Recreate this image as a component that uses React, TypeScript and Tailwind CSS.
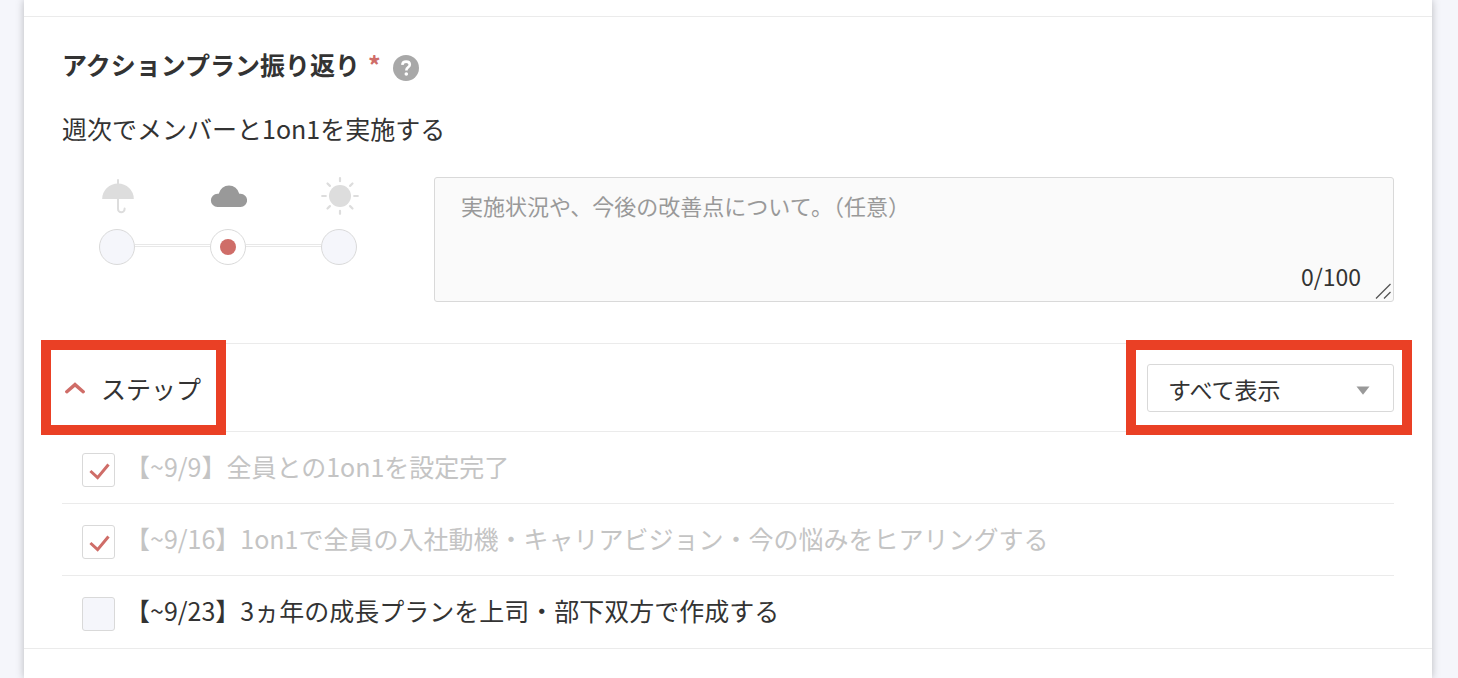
import { useState } from 'react'

const steps = [
  { id: 'step-1', label: '【~9/9】全員との1on1を設定完了', done: true },
  { id: 'step-2', label: '【~9/16】1on1で全員の入社動機・キャリアビジョン・今の悩みをヒアリングする', done: true },
  { id: 'step-3', label: '【~9/23】3ヵ年の成長プランを上司・部下双方で作成する', done: false },
]

const weathers = [
  { value: 'rain', label: '雨', Icon: UmbrellaIcon },
  { value: 'cloud', label: '曇り', Icon: CloudIcon },
  { value: 'sun', label: '晴れ', Icon: SunIcon },
]

function UmbrellaIcon() {
  return (
    <svg viewBox="0 0 38 38" className="h-[38px] w-[38px] shrink-0" aria-hidden="true">
      <path d="M4.200 22a15.800 15.400 0 0 1 31.600 0z" fill="currentColor" />
      <path d="M20 3v5M20 21v11a3.300 3.300 0 0 0 6.600 0v-.600" fill="none" stroke="currentColor" strokeWidth="2" strokeLinecap="round" />
    </svg>
  )
}

function CloudIcon() {
  return (
    <svg viewBox="0 0 38 38" className="h-[38px] w-[38px] shrink-0" aria-hidden="true">
      <path d="M8.500 30a6.500 6.500 0 0 1 0-13.200h1.200a10.600 11 0 0 1 20.600 0h1.200a6.600 6.600 0 0 1 0 13.200z" fill="currentColor" />
    </svg>
  )
}

function SunIcon() {
  return (
    <svg viewBox="0 0 38 38" className="h-[38px] w-[38px] shrink-0 overflow-visible" aria-hidden="true">
      <circle cx="20" cy="19" r="11" fill="currentColor" />
      <path
        d="M20 1.200v3M20 33.800v3M2.200 19h3.600M34.200 19h3.600M7.500 6.500l2.400 2.400M30.100 29.100l2.400 2.400M7.500 31.500l2.400-2.400M30.100 8.900l2.400-2.400"
        stroke="currentColor"
        strokeWidth="2.2"
        strokeLinecap="round"
      />
    </svg>
  )
}

export default function App() {
  const [weather, setWeather] = useState('cloud')
  const [comment, setComment] = useState('')
  const [open, setOpen] = useState(true)
  const [filter, setFilter] = useState('all')
  const [done, setDone] = useState(steps.filter(s => s.done).map(s => s.id))

  const toggle = (id: string) =>
    setDone(done.includes(id) ? done.filter(d => d !== id) : [...done, id])

  const visible = steps.filter(s => filter === 'all' || !done.includes(s.id))

  return (
    <div className="min-h-screen bg-[#f5f6fb] pl-6 pr-[26px] font-['Noto_Sans_CJK_JP',sans-serif] text-[#333]">
      <main className="min-h-screen bg-white pt-4 shadow-[0_0_8px_rgba(0,0,0,0.25)]">
        <section className="border-y border-[#ebebeb] px-[38px] pt-[29px]">

          {/* Title */}
          <div className="flex items-center">
            <h2 className="text-[25px] font-bold leading-9">
              アクションプラン振り返り
            </h2>
            <span className="ml-2 text-[25px] font-bold leading-9 text-[#cf6d68]">*</span>
            <button type="button" aria-label="ヘルプ" className="ml-3 pt-2">
              <svg viewBox="0 0 26 26" className="block h-[26px] w-[26px]" aria-hidden="true">
                <circle cx="13" cy="13" r="13" fill="#a8a8a8" />
                <path d="M9.300 9.900c.2-2.200 1.700-3.300 3.800-3.300 2.200 0 3.700 1.200 3.700 3.100 0 2.500-3.400 2.700-3.400 5.300v.400" fill="none" stroke="#fff" strokeWidth="2.600" />
                <circle cx="13.300" cy="19" r="1.800" fill="#fff" />
              </svg>
            </button>
          </div>

          <p className="mt-7 text-[25px] leading-9">週次でメンバーと1on1を実施する</p>

          {/* Weather and comment */}
          <div className="mt-[31px] flex items-start">
            <div role="radiogroup" aria-label="実施状況" className="ml-[37px] flex items-end">
              {weathers.map(({ value, label, Icon }, i) => (
                <div key={value} className="flex items-end">
                  {i > 0 && <div className="mb-[18px] h-[3px] w-[75px] border-y border-[#e8e8e8]" />}
                  <label
                    className={`flex w-9 flex-col items-center gap-[14px] ${weather === value ? 'text-[#999]' : 'text-[#ddd]'}`}>
                    <Icon />
                    <input
                      type="radio"
                      name="weather"
                      aria-label={label}
                      checked={weather === value}
                      onChange={() => setWeather(value)}
                      className="grid h-9 w-9 appearance-none place-items-center rounded-full border border-[#dadada] bg-[#f5f6fb] before:h-4 before:w-4 before:rounded-full checked:bg-white checked:before:bg-[#cf6d68]"
                    />
                  </label>
                </div>
              ))}
            </div>

            <div className="relative ml-[77px] flex-1">
              <textarea
                aria-label="コメント"
                maxLength={100}
                value={comment}
                onChange={e => setComment(e.target.value)}
                placeholder="実施状況や、今後の改善点について。（任意）"
                className="block h-[125px] w-full resize-none rounded-[3px] border border-[#d9d9d9] bg-[#fafafa] px-[26px] py-[11px] text-[22px] leading-8 placeholder:text-[#999]"
              />
              <span className="absolute bottom-[10px] right-[33px] text-[23px] leading-8">
                {comment.length}/100
              </span>
              <svg viewBox="0 0 16 16" className="absolute bottom-[3px] right-[3px] h-4 w-4" aria-hidden="true">
                <path d="M1 15.500L15.500 1M9 15.500L15.500 9" stroke="#555" strokeWidth="1.300" />
              </svg>
            </div>
          </div>

          {/* Steps header */}
          <div className="mt-[41px] flex h-[89px] items-center justify-between border-y border-[#ebebeb]">
            <div className="relative">
              <button
                type="button"
                aria-expanded={open}
                onClick={() => setOpen(!open)}
                className="flex items-center gap-4 pl-[3px] text-[25px] leading-9">
                <svg viewBox="0 0 20 12" className={`h-3 w-5 ${open ? '' : 'rotate-180'}`} aria-hidden="true">
                  <path d="M1.800 9.700L10 2.600l8.200 7.100" fill="none" stroke="#cf6d68" strokeWidth="3.400" strokeLinecap="round" />
                </svg>
                ステップ
              </button>
              <div className="pointer-events-none absolute -bottom-[29px] -left-[21px] -right-[25px] -top-[30px] border-[10px] border-[#ea4025]" />
            </div>

            <div className="relative">
              <select
                aria-label="表示するステップ"
                value={filter}
                onChange={e => setFilter(e.target.value)}
                className="block h-12 w-[247px] appearance-none rounded-[3px] border border-[#d9d9d9] bg-white px-5 pt-[3px] text-[23px]">
                <option value="all">すべて表示</option>
                <option value="todo">未完了のみ</option>
              </select>
              <svg viewBox="0 0 14 9" className="pointer-events-none absolute right-6 top-[22px] h-[9px] w-[14px]" aria-hidden="true">
                <path d="M.500.500h13L7 8.800z" fill="#999" />
              </svg>
              <div className="pointer-events-none absolute -bottom-[23px] -left-[21px] -right-[18px] -top-6 border-[10px] border-[#ea4025]" />
            </div>
          </div>

          {/* Steps */}
          {open && (
            <ul className="divide-y divide-[#ebebeb]">
              {visible.map(step => (
                <li key={step.id} className="flex min-h-[72px] items-start gap-[10px] pb-4 pl-5 pt-[21px]">
                  <span className="relative shrink-0">
                    <input
                      id={step.id}
                      type="checkbox"
                      checked={done.includes(step.id)}
                      onChange={() => toggle(step.id)}
                      className="block h-[34px] w-[33px] appearance-none rounded-[3px] border border-[#d9d9d9] bg-[#f5f6fb] checked:bg-white"
                    />
                    {done.includes(step.id) && (
                      <svg viewBox="0 0 33 34" className="pointer-events-none absolute inset-0 h-[34px] w-[33px]" aria-hidden="true">
                        <path d="M8.400 18l7.200 6.600L26.500 11.500" fill="none" stroke="#cf6d68" strokeWidth="3" />
                      </svg>
                    )}
                  </span>
                  <label
                    htmlFor={step.id}
                    className={`text-[25px] leading-[26px] ${done.includes(step.id) ? 'text-[#c4c4c4]' : ''}`}>
                    {step.label}
                  </label>
                </li>
              ))}
            </ul>
          )}
        </section>
      </main>
    </div>
  )
}
